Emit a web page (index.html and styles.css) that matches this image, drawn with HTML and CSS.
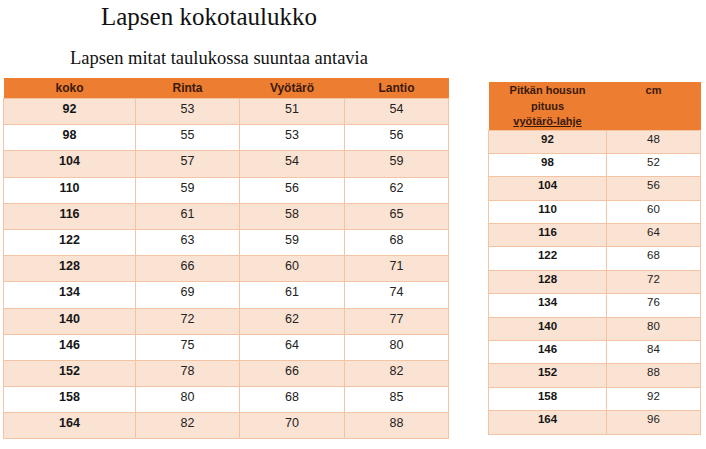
FILE: index.html
```html
<!DOCTYPE html>
<html lang="fi">
<head>
<meta charset="utf-8">
<title>Lapsen kokotaulukko</title>
<link rel="stylesheet" href="styles.css">
</head>
<body>
<h1 class="title">Lapsen kokotaulukko</h1>
<p class="subtitle">Lapsen mitat taulukossa suuntaa antavia</p>
<div class="tables">
  <table class="size-table">
    <colgroup><col class="c1"><col class="c2"><col class="c3"><col class="c4"></colgroup>
    <thead>
      <tr><th>koko</th><th>Rinta</th><th>Vyötärö</th><th>Lantio</th></tr>
    </thead>
    <tbody>
      <tr><td>92</td><td>53</td><td>51</td><td>54</td></tr>
      <tr><td>98</td><td>55</td><td>53</td><td>56</td></tr>
      <tr><td>104</td><td>57</td><td>54</td><td>59</td></tr>
      <tr><td>110</td><td>59</td><td>56</td><td>62</td></tr>
      <tr><td>116</td><td>61</td><td>58</td><td>65</td></tr>
      <tr><td>122</td><td>63</td><td>59</td><td>68</td></tr>
      <tr><td>128</td><td>66</td><td>60</td><td>71</td></tr>
      <tr><td>134</td><td>69</td><td>61</td><td>74</td></tr>
      <tr><td>140</td><td>72</td><td>62</td><td>77</td></tr>
      <tr><td>146</td><td>75</td><td>64</td><td>80</td></tr>
      <tr><td>152</td><td>78</td><td>66</td><td>82</td></tr>
      <tr><td>158</td><td>80</td><td>68</td><td>85</td></tr>
      <tr><td>164</td><td>82</td><td>70</td><td>88</td></tr>
    </tbody>
  </table>
  <table class="leg-table">
    <colgroup><col class="d1"><col class="d2"></colgroup>
    <thead>
      <tr><th>Pitkän housun<br>pituus<br><u>vyötärö-lahje</u></th><th>cm</th></tr>
    </thead>
    <tbody>
      <tr><td>92</td><td>48</td></tr>
      <tr><td>98</td><td>52</td></tr>
      <tr><td>104</td><td>56</td></tr>
      <tr><td>110</td><td>60</td></tr>
      <tr><td>116</td><td>64</td></tr>
      <tr><td>122</td><td>68</td></tr>
      <tr><td>128</td><td>72</td></tr>
      <tr><td>134</td><td>76</td></tr>
      <tr><td>140</td><td>80</td></tr>
      <tr><td>146</td><td>84</td></tr>
      <tr><td>152</td><td>88</td></tr>
      <tr><td>158</td><td>92</td></tr>
      <tr><td>164</td><td>96</td></tr>
    </tbody>
  </table>
</div>
</body>
</html>
```
FILE: styles.css
```css
html, body {
  margin: 0;
  padding: 0;
  background: #ffffff;
}
body {
  width: 706px;
  height: 449px;
  overflow: hidden;
  font-family: "Liberation Sans", Arial, sans-serif;
  color: #222;
}
.title {
  margin: 4px 0 0 0;
  padding-left: 101px;
  font-family: "Liberation Serif", "Times New Roman", serif;
  font-weight: normal;
  font-size: 25px;
  line-height: 25px;
  color: #111;
}
.subtitle {
  margin: 19px 0 0 0;
  padding-left: 70px;
  font-family: "Liberation Serif", "Times New Roman", serif;
  font-size: 18.5px;
  line-height: 20px;
  color: #111;
}
.tables {
  display: flex;
  align-items: flex-start;
  margin-top: 10px;
  padding-left: 3px;
}
table {
  border-collapse: collapse;
  table-layout: fixed;
}
th {
  background: #ed7d31;
  color: #3a1a08;
  font-weight: bold;
  border: none;
  padding: 0;
}
td {
  border: 1px solid #f3c4a4;
  padding: 0;
  text-align: center;
  vertical-align: top;
}
tbody tr:nth-child(odd) td {
  background: #fbe3d3;
}
tbody tr:nth-child(even) td {
  background: #ffffff;
}
td:first-child {
  font-weight: bold;
  color: #151515;
}
.size-table {
  width: 445px;
}
.size-table .c1 { width: 132px; }
.size-table .c2 { width: 104px; }
.size-table .c3 { width: 105px; }
.size-table .c4 { width: 104px; }
.size-table th {
  height: 20px;
  font-size: 12px;
  line-height: 20px;
}
.size-table td {
  height: 26.2px;
  font-size: 12.5px;
  line-height: 16px;
  padding-top: 2px;
  box-sizing: border-box;
}
.leg-table {
  width: 212px;
  margin-top: 4px;
  margin-left: 39px;
}
.leg-table .d1 { width: 118px; }
.leg-table .d2 { width: 94px; }
.leg-table th {
  height: 47px;
  font-size: 11px;
  line-height: 15.5px;
  vertical-align: top;
  padding-top: 1px;
  box-sizing: border-box;
}
.leg-table td {
  height: 23.4px;
  font-size: 11.5px;
  line-height: 15px;
  padding-top: 1px;
  box-sizing: border-box;
}
```
